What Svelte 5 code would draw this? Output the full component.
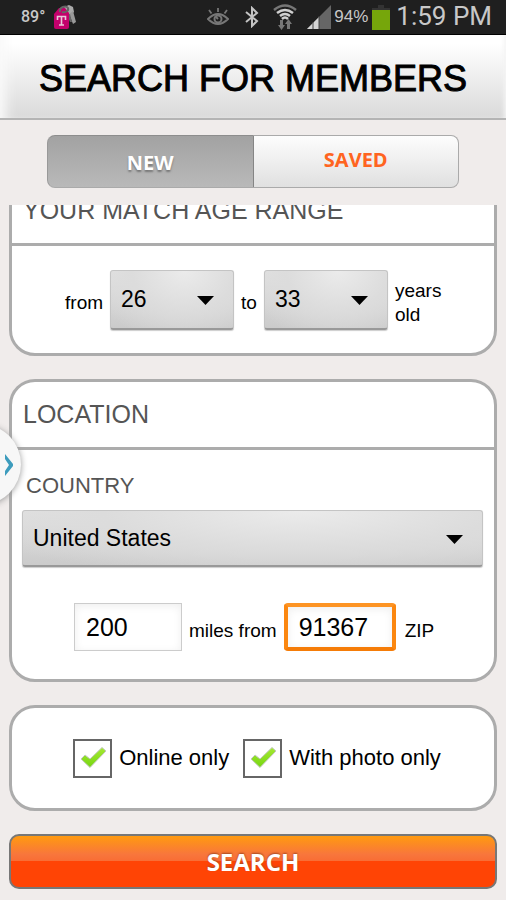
<script>
  let tab = $state('new');
  let ageFrom = $state('26');
  let ageTo = $state('33');
  let country = $state('United States');
  let miles = $state('200');
  let zip = $state('91367');
  let online = $state(true);
  let photo = $state(true);
  const ages = Array.from({ length: 82 }, (_, i) => String(i + 18));
</script>

{#snippet arrow()}
  <svg class="arrow" width="17" height="9" viewBox="0 0 17 9" aria-hidden="true"><path d="M0 0H17L8.500 9Z" /></svg>
{/snippet}

{#snippet tick()}
  <svg class="tick" width="27" height="23" viewBox="0 0 27 23" aria-hidden="true">
    <defs>
      <linearGradient id="leaf" x1="0" y1="0" x2="0" y2="1">
        <stop offset="0" stop-color="#a5e834" />
        <stop offset="1" stop-color="#76d610" />
      </linearGradient>
    </defs>
    <path d="M1 13L5 9L10 13L22 1.500L26 5L10 21.500Z" fill="url(#leaf)" stroke="#c3c8c0" stroke-width="1" stroke-linejoin="round" />
  </svg>
{/snippet}

<div class="app">
  <div class="status">
    <span class="temp">89°</span>
    <svg class="keys" width="24" height="26" viewBox="0 0 24 26" aria-hidden="true">
      <path d="M11 3L16 1L20 3L21 8L18 11L13 10Z" fill="#aaa" />
      <path d="M16 10L20 7L23 18L20 20L18 15Z" fill="#999" />
      <path d="M14 11L17 10L19 18L17 18Z" fill="#666" />
      <path d="M1 10L6 4H12L16 9V23Q16 25 14 25H3Q1 25 1 23Z" fill="#c4006c" />
      <path d="M7 8C6 3 13 1 15 4C16 7 12 9 9 8" fill="none" stroke="#666" stroke-width="2" />
      <path d="M4.500 16V12.500H12.500V16M8.500 12V21M6 21H11" fill="none" stroke="#e8c8d9" stroke-width="1.600" />
    </svg>
    <span class="spacer"></span>
    <svg class="eye" width="22" height="18" viewBox="0 0 22 18" aria-hidden="true">
      <path d="M1 11Q11 1 21 11Q11 21 1 11Z" fill="none" stroke="#777" stroke-width="2" />
      <circle cx="11" cy="11" r="3.500" fill="none" stroke="#777" stroke-width="2" />
      <path d="M9 9L11 11" stroke="#777" stroke-width="2" />
      <path d="M11 0V4M2 2L4.500 5.500M20 2L17.500 5.500" stroke="#777" stroke-width="1.800" />
    </svg>
    <svg class="bt" width="14" height="22" viewBox="0 0 14 22" aria-hidden="true">
      <path d="M1 6L12 15L7 20V2L12 7L1 16" fill="none" stroke="#c4c4c4" stroke-width="2" />
    </svg>
    <svg class="wifi" width="24" height="26" viewBox="0 0 24 26" aria-hidden="true">
      <g fill="none" stroke-width="2.500">
        <path d="M1 6Q12 -3 23 6" stroke="#777" />
        <path d="M4 9Q12 3 20 9M7 12Q12 8 17 12M9 15Q12 12 15 15" stroke="#d0d0d0" />
      </g>
      <path d="M7 16H10V21H12L8.500 26L5 21H7ZM14 25V20H12L15.500 15L19 20H17V25Z" fill="#777" />
    </svg>
    <svg class="signal" width="24" height="24" viewBox="0 0 24 24" aria-hidden="true">
      <path d="M0 24L24 0V24Z" fill="#666" /><path d="M0 24L12 12V24Z" fill="#d4d4d4" /><path d="M6 17V24M12 11V24" stroke="#444" stroke-width="1" />
    </svg>
    <span class="percent">94%</span>
    <svg class="battery" width="18" height="25" viewBox="0 0 18 25" aria-hidden="true">
      <path d="M6 0H12V3H18V5H0V3H6Z" fill="#333" /><path d="M0 5H18V25H0Z" fill="#76a60b" />
    </svg>
    <span class="time">1:59 PM</span>
  </div>

  <header><h1>SEARCH FOR MEMBERS</h1></header>

  <nav>
    <button type="button" class="new" aria-pressed={tab === 'new'} onclick={() => (tab = 'new')}>NEW</button>
    <button type="button" class="saved" aria-pressed={tab === 'saved'} onclick={() => (tab = 'saved')}>SAVED</button>
  </nav>

  <main>
    <form onsubmit={(e) => e.preventDefault()}>
      <section class="card">
        <h2>YOUR MATCH AGE RANGE</h2>
        <div class="ages">
          <label for="age-from">from</label>
          <div class="picker age">
            <select id="age-from" bind:value={ageFrom}>
              {#each ages as age}<option>{age}</option>{/each}
            </select>
            {@render arrow()}
          </div>
          <label for="age-to">to</label>
          <div class="picker age">
            <select id="age-to" bind:value={ageTo}>
              {#each ages as age}<option>{age}</option>{/each}
            </select>
            {@render arrow()}
          </div>
          <span class="years">years old</span>
        </div>
      </section>

      <section class="card">
        <h2>LOCATION</h2>
        <div class="place">
          <label class="country" for="country">COUNTRY</label>
          <div class="picker wide">
            <select id="country" bind:value={country}>
              <option>United States</option>
              <option>Canada</option>
            </select>
            {@render arrow()}
          </div>
          <div class="distance">
            <input id="miles" class="text" inputmode="numeric" bind:value={miles} />
            <label for="miles">miles from</label>
            <input id="zip" class="text active" inputmode="numeric" bind:value={zip} />
            <label class="zip" for="zip">ZIP</label>
          </div>
        </div>
      </section>

      <section class="card checks">
        <label><span class="box"><input type="checkbox" bind:checked={online} />{#if online}{@render tick()}{/if}</span>Online only</label>
        <label><span class="box"><input type="checkbox" bind:checked={photo} />{#if photo}{@render tick()}{/if}</span>With photo only</label>
      </section>

      <button class="search" type="submit">SEARCH</button>
    </form>
  </main>

  <button type="button" class="drawer" aria-label="Open panel">
    <svg width="9" height="22" viewBox="0 0 9 22" aria-hidden="true"><path d="M0 0L8 10V12L0 22V17L4 11L0 5Z" fill="#3d9cbd" /></svg>
  </button>
</div>

<style>
  :global(body) { margin: 0; background: #f0eceb; }
  * { box-sizing: border-box; }
  .app {
    position: relative;
    min-height: 100vh;
    overflow: hidden;
    background: #f0eceb;
    color: #000;
    font-family: "Liberation Sans", Arial, sans-serif;
  }
  button, input, select { font-family: inherit; margin: 0; }
  svg { display: block; flex: none; }

  .status {
    display: flex;
    align-items: center;
    height: 35px;
    padding: 0 14px 0 21px;
    background: #1f1f1f;
    border-bottom: 1px solid #000;
    color: #c8c8c8;
  }
  .temp { width: 24px; font: 500 16px/24px Roboto, sans-serif; }
  .keys { margin-left: 8px; }
  .spacer { flex: 1; }
  .bt { margin-left: 16px; }
  .wifi { margin-left: 14px; }
  .signal { margin-left: 10px; }
  .percent { margin-left: 3px; font-size: 17px; }
  .battery { margin-left: 4px; }
  .time { margin-left: 6px; font: 26px/30px Roboto, sans-serif; padding-bottom: 2px; }

  header {
    height: 85px;
    padding-top: 23px;
    background: linear-gradient(#fff 10%, #dadada);
    border-bottom: 2px solid #b4b4b4;
    box-shadow: inset 14px 0 12px -8px #fafafa, inset -4px 0 4px -2px #f4f4f4;
  }
  h1 {
    margin: 0;
    text-align: center;
    font-size: 36px;
    line-height: 42px;
    font-weight: 400;
    -webkit-text-stroke: 1px #000;
  }

  nav { display: flex; height: 53px; margin: 15px 47px 0; }
  nav button {
    flex: 1;
    border: 1px solid #aaa;
    font: bold 20px/28px "Open Sans", sans-serif;
  }
  .new {
    padding: 3px 0 0;
    border-color: #8d8d8d #858585 #aaa #999;
    border-radius: 8px 0 0 8px;
    background: linear-gradient(#a2a2a2, #b9b9b9);
    color: #fff;
    text-shadow: 0 2px 2px #777;
  }
  .saved {
    padding: 0 0 3px;
    border-left: 0;
    border-radius: 0 8px 8px 0;
    background: linear-gradient(#fdfdfd, #e0e0e0);
    color: #ff6420;
  }

  main { margin-top: 17px; padding: 0 9px; overflow: hidden; }
  form { display: flex; flex-direction: column; gap: 23px; margin-top: -30px; padding-bottom: 11px; }
  .card { border: 3px solid #acacac; border-radius: 26px; background: #fff; }
  h2 {
    margin: 0;
    padding: 18px 11px;
    border-bottom: 3px solid #acacac;
    font-size: 25px;
    line-height: 29px;
    font-weight: 400;
    color: #555;
  }

  .ages { display: flex; align-items: center; justify-content: center; gap: 7px; height: 107px; padding-left: 8px; }
  .ages label, .years, .distance label { font-size: 19px; line-height: 24px; }
  .ages label { padding-top: 6px; }
  .years { width: 54px; padding-top: 6px; }

  .picker { position: relative; }
  .age { width: 124px; height: 60px; }
  .wide { height: 57px; }
  .picker select {
    appearance: none;
    width: 100%;
    height: 100%;
    padding: 0 30px 0 10px;
    border: 1px solid #c4c4c4;
    border-bottom: 2px solid #999;
    border-radius: 3px;
    background: radial-gradient(ellipse at 60% 0, #ebebeb, #dcdcdc 50%, transparent 90%), linear-gradient(#e2e2e2, #cbcbcb);
    box-shadow: 0 1px 1px #ccc;
    color: #000;
    font-size: 23px;
  }
  .arrow { position: absolute; right: 20px; top: 50%; margin-top: -4px; pointer-events: none; }

  .place { padding: 22px 11px 28px 10px; }
  .country { display: block; padding: 0 4px; margin-bottom: 11px; font-size: 22px; line-height: 27px; color: #555; }
  .distance { display: flex; align-items: center; margin-top: 36px; padding-left: 52px; gap: 7px; }
  .distance label { padding-top: 7px; }
  .distance .zip { margin-left: 2px; }
  .text {
    width: 108px;
    height: 48px;
    padding: 0 11px;
    border: 1px solid #ccc;
    border-radius: 0;
    background: #fff;
    box-shadow: inset 0 2px 8px #eee;
    font-size: 25px;
    outline: none;
  }
  .active { width: 112px; border: 4px solid #fb8710; border-color: #fd9424 #fb8710 #f57c08; border-radius: 4px; }

  .checks { display: flex; align-items: center; justify-content: center; gap: 14px; height: 106px; padding-left: 8px; }
  .checks label { display: flex; align-items: center; gap: 7px; font-size: 22px; white-space: nowrap; }
  .box { position: relative; display: block; }
  .box input { display: block; appearance: none; width: 39px; height: 39px; border: 2px solid #666; background: #fff; }
  .tick { position: absolute; left: 7px; top: 7px; pointer-events: none; }

  .search {
    height: 55px;
    border: 2px solid #777;
    border-radius: 10px;
    background: linear-gradient(#ff9a10, #f8763c 36%, #f86c34 50%, #ff4405 50%);
    color: #fff;
    font: bold 24px/28px "Open Sans", sans-serif;
    text-shadow: 0 -1px 2px #a64a20;
  }
  .drawer {
    position: absolute;
    left: -60px;
    top: 424px;
    display: flex;
    align-items: center;
    justify-content: flex-end;
    width: 81px;
    height: 81px;
    padding: 0 7px 0 0;
    border: 0;
    border-radius: 50%;
    background: #f7f7f7;
    box-shadow: 0 1px 6px #999;
  }
</style>
